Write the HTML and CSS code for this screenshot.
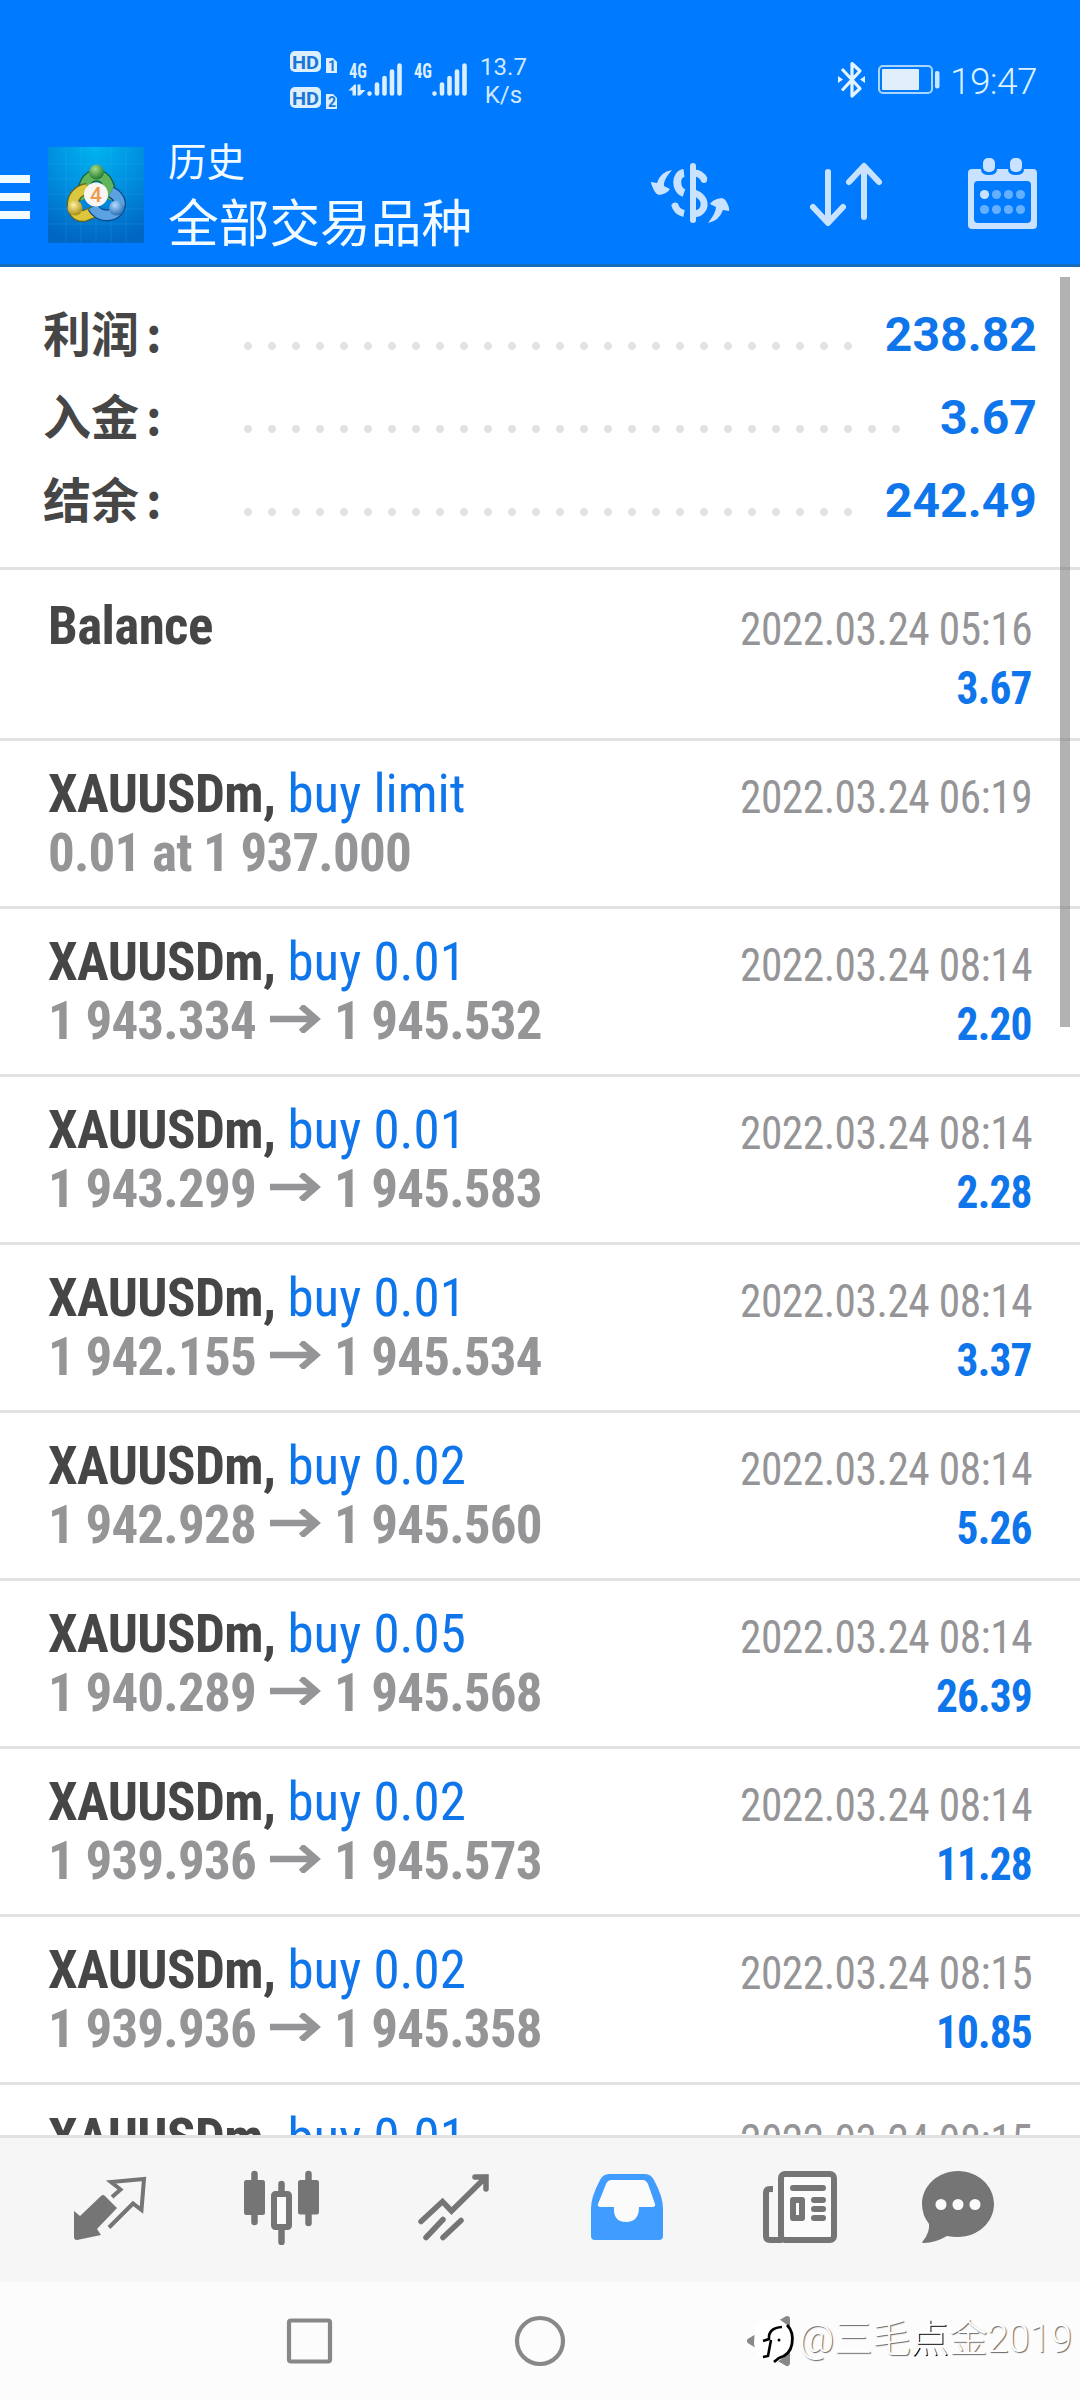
FILE: index.html
```html
<!DOCTYPE html>
<html lang="zh-CN">
<head>
<meta charset="utf-8">
<title>历史</title>
<link rel="stylesheet" href="styles.css">
</head>
<body>
<header class="header">
  <div class="status">
    <svg class="status-left" width="260" height="80" viewBox="280 40 260 80">
      <g fill="#dcefff">
        <rect x="290" y="51" width="31" height="21" rx="5"/>
        <rect x="290" y="87" width="31" height="21" rx="5"/>
        <path d="M326 58h7l4 4v11h-11z"/>
        <path d="M326 94h7l4 4v11h-11z"/>
      </g>
      <g class="hd">
        <text x="292" y="68.500" textLength="27" lengthAdjust="spacingAndGlyphs">HD</text>
        <text x="292" y="104.500" textLength="27" lengthAdjust="spacingAndGlyphs">HD</text>
        <text class="sim" x="328" y="71">1</text>
        <text class="sim" x="328" y="107">2</text>
      </g>
      <g class="net">
        <text x="349" y="77.500" textLength="18" lengthAdjust="spacingAndGlyphs">4G</text>
        <text x="414" y="77.500" textLength="18" lengthAdjust="spacingAndGlyphs">4G</text>
      </g>
      <path d="M348.500 90.500l6-6h1.500v11h-3.500v-5zM357.500 84.500h3v5.500h5l-5.500 5.500h-2.500z" fill="#dcefff"/>
      <g stroke="#dcefff" stroke-width="4.600" stroke-linecap="round">
        <path d="M369.500 93.500v.1M377 84.500v9M384.500 78v15.500M392 71.500v22M399.500 65.500v28"/>
        <path d="M434.500 93.500v.1M442 84.500v9M449.500 78v15.500M457 71.500v22M464.500 65.500v28"/>
      </g>
      <g class="speed">
        <text x="503.500" y="75" text-anchor="middle">13.7</text>
        <text x="503.500" y="103" text-anchor="middle">K/s</text>
      </g>
    </svg>
    <svg class="status-right" width="112" height="50" viewBox="834 56 112 50">
      <path d="M842 69l18 19.500-8 7.500V63.500l8 7.500-18 19.500" fill="none" stroke="#e4f4ff" stroke-width="3.200" stroke-linejoin="round"/>
      <path d="M838 76l5 3.500-5 3.500zM865 76l-5 3.500 5 3.500z" fill="#e4f4ff"/>
      <rect x="879" y="66" width="53" height="27" rx="4" fill="none" stroke="#a8d6ff" stroke-width="2"/>
      <rect x="882" y="69" width="37" height="21" rx="1" fill="#e1effc"/>
      <rect x="935" y="71" width="4.500" height="17.500" rx="2" fill="#c9e6ff"/>
    </svg>
    <span class="clock">19:47</span>
  </div>
  <div class="appbar">
    <svg class="menu" width="30" height="44" viewBox="0 0 30 44"><path d="M0 0h30v8H0zM0 18h30v8H0zM0 36h30v8H0z" fill="#f2fbff"/></svg>
    <svg class="logo" width="96" height="96" viewBox="0 0 96 96">
      <defs>
        <radialGradient id="bg" cx=".5" cy="0" r="1"><stop offset="0" stop-color="#00b4f0"/><stop offset=".5" stop-color="#008ede"/><stop offset="1" stop-color="#0066c4"/></radialGradient>
        <radialGradient id="gr" cx=".4" cy=".3" r=".7"><stop offset="0" stop-color="#a5dc8a"/><stop offset="1" stop-color="#237a2e"/></radialGradient>
        <radialGradient id="ye" cx=".4" cy=".3" r=".7"><stop offset="0" stop-color="#fff3a0"/><stop offset="1" stop-color="#a98d14"/></radialGradient>
        <radialGradient id="bl" cx=".4" cy=".3" r=".7"><stop offset="0" stop-color="#b5dcff"/><stop offset="1" stop-color="#2770b8"/></radialGradient>
      </defs>
      <rect width="96" height="96" fill="url(#bg)"/>
      <path d="M18 0v96M33 0v96M48 0v96M63 0v96M78 0v96M0 17h96M0 32h96M0 47h96M0 62h96M0 77h96" stroke="#5fc8ff" stroke-opacity=".14"/>
      <path d="M37 52a13 16 0 1 1 23 0" fill="none" stroke="#145c38" stroke-width="12"/>
      <path d="M37 52a13 16 0 1 1 23 0" fill="none" stroke="#5fb45c" stroke-width="9.500"/>
      <path d="M39 42c-18 2-19 28-3 27l10-4" fill="none" stroke="#5d6520" stroke-width="12"/>
      <path d="M39 42c-18 2-19 28-3 27l10-4" fill="none" stroke="#dbc63c" stroke-width="9.500"/>
      <path d="M45 60c7 13 27 10 27-4q-1-7-9-11" fill="none" stroke="#0c4584" stroke-width="12"/>
      <path d="M45 60c7 13 27 10 27-4q-1-7-9-11" fill="none" stroke="#5ba2e2" stroke-width="9.500"/>
      <circle cx="48.500" cy="25" r="7.500" fill="url(#gr)"/>
      <circle cx="27" cy="61" r="7.500" fill="url(#ye)"/>
      <circle cx="68.500" cy="61" r="7.500" fill="url(#bl)"/>
      <circle cx="48" cy="47.500" r="12" fill="#f8f5f2"/>
      <text x="48" y="55" class="logo-digit" text-anchor="middle">4</text>
    </svg>
    <div class="titles">
      <div class="subtitle">历史</div>
      <h1 class="title">全部交易品种</h1>
    </div>
    <svg class="actions" width="400" height="80" viewBox="645 154 400 80">
      <g fill="none" stroke="#c8e2ff" stroke-width="6" stroke-linecap="round">
        <path d="M693 166v54"/>
        <path stroke-linecap="butt" stroke-width="8" d="M684 173c-9 1-9 17 0 20"/>
        <path stroke-linecap="butt" stroke-width="7" d="M694 173q7 0 10.500 7M694 193c14 4 13 20 0 21"/>
        <path d="M704 179.500v.5M675 205.500v.5"/>
        <path stroke-linecap="butt" stroke-width="7" d="M674.500 204q2 8 9.500 9.500"/>
      </g>
      <g fill="#c8e2ff">
        <path d="M672 170q-9 10-8 16l6 3q-3 5-11 6-3-1-4-3-4-7-4-10l6 1q3-11 15-13z"/>
        <path d="M708 223q8-10 8-16l-6-3q3-5 12-6 3 1 4 3 4 7 3 10l-6-1q-4 11-15 13z"/>
      </g>
      <path d="M828 172v50M813 207l15 16 15-16M864 217v-50M849 182l15-16 15 16" fill="none" stroke="#c8e2ff" stroke-width="6" stroke-linecap="round" stroke-linejoin="round"/>
      <path fill-rule="evenodd" fill="#c8e2ff" d="M972 169h9q0 6 8 6t8-6h11q0 6 8 6t8-6h9q4 0 4 4v52q0 4-4 4h-61q-4 0-4-4v-52q0-4 4-4zM978 181q-4 0-4 4v34q0 4 4 4h49q4 0 4-4v-34q0-4-4-4z"/>
      <rect x="983" y="158" width="12" height="14" rx="5" fill="#c8e2ff"/>
      <rect x="1010" y="158" width="12" height="14" rx="5" fill="#c8e2ff"/>
      <circle cx="984.500" cy="194.500" r="4.600" fill="#c8e2ff"/>
      <g fill="#64afff"><circle cx="996.500" cy="194.500" r="4.600"/><circle cx="1008.500" cy="194.500" r="4.600"/><circle cx="1020.500" cy="194.500" r="4.600"/><circle cx="984.500" cy="209.500" r="4.600"/><circle cx="996.500" cy="209.500" r="4.600"/><circle cx="1008.500" cy="209.500" r="4.600"/><circle cx="1020.500" cy="209.500" r="4.600"/></g>
    </svg>
  </div>
</header>

<main class="history">
  <section class="summary">
    <div class="sum"><span class="sum-label">利润<span class="colon">:</span></span><span class="dots"></span><span class="sum-value">238.82</span></div>
    <div class="sum"><span class="sum-label">入金<span class="colon">:</span></span><span class="dots"></span><span class="sum-value">3.67</span></div>
    <div class="sum"><span class="sum-label">结余<span class="colon">:</span></span><span class="dots"></span><span class="sum-value">242.49</span></div>
  </section>
  <section class="deal first">
    <div class="line"><b class="symbol">Balance</b><span class="date">2022.03.24 05:16</span></div>
    <div class="line"><b class="profit">3.67</b></div>
  </section>
  <section class="deal">
    <div class="line"><b class="symbol">XAUUSDm,</b><span class="side">buy limit</span><span class="date">2022.03.24 06:19</span></div>
    <div class="line"><b class="price">0.01 at 1 937.000</b></div>
  </section>
  <section class="deal">
    <div class="line"><b class="symbol">XAUUSDm,</b><span class="side">buy 0.01</span><span class="date">2022.03.24 08:14</span></div>
    <div class="line"><b class="price">1 943.334</b><svg class="arrow" viewBox="0 0 52 28"><path d="M0 14h46M31 1l15 13-15 13"/></svg><b class="price">1 945.532</b><b class="profit">2.20</b></div>
  </section>
  <section class="deal">
    <div class="line"><b class="symbol">XAUUSDm,</b><span class="side">buy 0.01</span><span class="date">2022.03.24 08:14</span></div>
    <div class="line"><b class="price">1 943.299</b><svg class="arrow" viewBox="0 0 52 28"><path d="M0 14h46M31 1l15 13-15 13"/></svg><b class="price">1 945.583</b><b class="profit">2.28</b></div>
  </section>
  <section class="deal">
    <div class="line"><b class="symbol">XAUUSDm,</b><span class="side">buy 0.01</span><span class="date">2022.03.24 08:14</span></div>
    <div class="line"><b class="price">1 942.155</b><svg class="arrow" viewBox="0 0 52 28"><path d="M0 14h46M31 1l15 13-15 13"/></svg><b class="price">1 945.534</b><b class="profit">3.37</b></div>
  </section>
  <section class="deal">
    <div class="line"><b class="symbol">XAUUSDm,</b><span class="side">buy 0.02</span><span class="date">2022.03.24 08:14</span></div>
    <div class="line"><b class="price">1 942.928</b><svg class="arrow" viewBox="0 0 52 28"><path d="M0 14h46M31 1l15 13-15 13"/></svg><b class="price">1 945.560</b><b class="profit">5.26</b></div>
  </section>
  <section class="deal">
    <div class="line"><b class="symbol">XAUUSDm,</b><span class="side">buy 0.05</span><span class="date">2022.03.24 08:14</span></div>
    <div class="line"><b class="price">1 940.289</b><svg class="arrow" viewBox="0 0 52 28"><path d="M0 14h46M31 1l15 13-15 13"/></svg><b class="price">1 945.568</b><b class="profit">26.39</b></div>
  </section>
  <section class="deal">
    <div class="line"><b class="symbol">XAUUSDm,</b><span class="side">buy 0.02</span><span class="date">2022.03.24 08:14</span></div>
    <div class="line"><b class="price">1 939.936</b><svg class="arrow" viewBox="0 0 52 28"><path d="M0 14h46M31 1l15 13-15 13"/></svg><b class="price">1 945.573</b><b class="profit">11.28</b></div>
  </section>
  <section class="deal">
    <div class="line"><b class="symbol">XAUUSDm,</b><span class="side">buy 0.02</span><span class="date">2022.03.24 08:15</span></div>
    <div class="line"><b class="price">1 939.936</b><svg class="arrow" viewBox="0 0 52 28"><path d="M0 14h46M31 1l15 13-15 13"/></svg><b class="price">1 945.358</b><b class="profit">10.85</b></div>
  </section>
  <section class="deal">
    <div class="line"><b class="symbol">XAUUSDm,</b><span class="side">buy 0.01</span><span class="date">2022.03.24 08:15</span></div>
  </section>
  <div class="scrollbar"></div>
</main>

<nav class="tabs">
  <svg viewBox="70 2165 80 80">
    <path d="M74 2211l6 5 21-20q2-2 4 0l12 12-20 21 4 6-24 5q-3 0-3-3z" fill="#757575"/>
    <path d="M112 2197l8.500-7.500-9.500-7.500 33-3-2.500 31-8.500-6.500-24 24" fill="none" stroke="#757575" stroke-width="4"/>
  </svg>
  <svg viewBox="242 2165 80 80">
    <path d="M254.500 2174v48M281.500 2184v12M281.500 2228v14M308.500 2174v49" stroke="#757575" stroke-width="6.500" stroke-linecap="round"/>
    <rect x="244" y="2180" width="21" height="35" rx="2.500" fill="#757575"/>
    <rect x="298" y="2180" width="21" height="34.500" rx="2.500" fill="#757575"/>
    <rect x="274" y="2194" width="15" height="33" rx="1.500" fill="#fafafa" stroke="#757575" stroke-width="6"/>
  </svg>
  <svg viewBox="414 2165 80 80">
    <path d="M421 2221.500l21.500-20 9 9.500L486 2177M475 2177h11v12M426 2237.500l17-18M443 2237.500l18-17" fill="none" stroke="#757575" stroke-width="5.500" stroke-linecap="round" stroke-linejoin="miter"/>
  </svg>
  <svg viewBox="586 2165 80 80">
    <path d="M609 2174h36q6 0 9 6 9 17 9 28v28q0 4-4 4h-64q-4 0-4-4v-28q0-11 9-28 3-6 9-6z" fill="#409cff"/>
    <path d="M611 2180h32q3 0 5 4l7 20q1 3-3 3h-13q0 15-13 15t-12-15h-13q-4 0-3-3l8-20q2-4 5-4z" fill="#fbfbfb"/>
  </svg>
  <svg viewBox="760 2165 80 80">
    <rect x="781" y="2174" width="53" height="66" rx="4" fill="#fbfbfb" stroke="#757575" stroke-width="6"/>
    <path d="M773 2189h-3q-4 0-4 4v43q0 4 4 4h12" fill="none" stroke="#757575" stroke-width="6"/>
    <path d="M793 2188h30M814 2200h9M814 2209h9M814 2218h9" stroke="#757575" stroke-width="6" stroke-linecap="round"/>
    <rect x="793" y="2200" width="9" height="18" fill="#fbfbfb" stroke="#757575" stroke-width="6" stroke-linejoin="round"/>
  </svg>
  <svg viewBox="918 2165 80 80">
    <path d="M958 2171c20 0 36 15 36 33s-16 33-36 33q-6 0-11-1-12 7-23 7-3 0-1-2 7-9 6-17-7-9-7-20c0-18 16-33 36-33z" fill="#757575"/>
    <g fill="#fbfbfb"><circle cx="941" cy="2204.500" r="5.500"/><circle cx="958" cy="2204.500" r="5.500"/><circle cx="975" cy="2204.500" r="5.500"/></g>
  </svg>
</nav>

<footer class="sysnav">
  <svg width="50" height="56" viewBox="284 2313 50 56"><rect x="289" y="2320.500" width="41" height="41" rx="2" fill="none" stroke="#888" stroke-width="4.200"/></svg>
  <svg width="56" height="56" viewBox="512 2313 56 56"><circle cx="540" cy="2341" r="23" fill="none" stroke="#888" stroke-width="4.200"/></svg>
  <svg width="56" height="56" viewBox="744 2313 56 56">
    <path d="M787 2319l-37 22 37 22z" fill="none" stroke="#888" stroke-width="6" stroke-linejoin="round"/>
    <path d="M755 2325q7-7 13-5l11-1 11 8q6 15-1 26l-13 10-15-4q-7-12-7-15z" fill="#fff"/>
    <path d="M787 2325q7 7 5 19-2 11-13 14l-5 4" fill="none" stroke="#000" stroke-width="2.800"/>
    <path d="M763 2341l6-2q-1-11 13-12M771 2340l-3 16-5 1" fill="none" stroke="#000" stroke-width="2.600"/>
    <circle cx="779" cy="2340" r="1.500" fill="#000"/>
  </svg>
  <span class="watermark">@三毛<span class="dark">点</span>金2019</span>
</footer>
</body>
</html>
```
FILE: styles.css
```css
* { box-sizing: border-box; }
body {
  margin: 0;
  width: 1080px;
  height: 2400px;
  display: flex;
  flex-direction: column;
  overflow: hidden;
  background: #fff;
  font-family: Roboto, "Noto Sans CJK SC", sans-serif;
}
svg { display: block; flex: none; }

/* header */
.header {
  flex: none;
  height: 267px;
  background: #007aff;
  border-bottom: 3px solid #176cba;
  color: #f2fbff;
}
.status {
  height: 123px;
  display: flex;
  align-items: flex-start;
  padding: 40px 44px 0 280px;
}
.status-right { margin: 16px 0 0 auto; }
.clock {
  width: 90px;
  padding: 19px 0 0 4px;
  font-size: 37px;
  line-height: 46px;
  font-weight: 300;
  letter-spacing: -0.6px;
  white-space: nowrap;
  color: #dcf1ff;
}
.hd { font: 700 19px Roboto, sans-serif; fill: #1b75d6; }
.sim { font-size: 14px; }
.net { font: 700 21px "Roboto Condensed", Roboto, sans-serif; fill: #dcefff; }
.speed { font: 400 24px Roboto, sans-serif; fill: #cfe8ff; }
.appbar {
  height: 141px;
  display: flex;
  align-items: flex-start;
}
.menu { margin-top: 52px; }
.logo { margin: 24px 0 0 18px; }
.logo-digit { font: 500 21px Roboto, sans-serif; fill: #ee9a4d; }
.titles { margin: 12px 0 0 24px; }
.subtitle { font-size: 38.5px; line-height: 56px; }
.title { margin: 1px 0 0; font-size: 50.7px; line-height: 66px; font-weight: 400; white-space: nowrap; }
.actions { margin: 31px 35px 0 auto; }

/* list */
.history {
  position: relative;
  flex: none;
  height: 1868px;
  overflow: hidden;
}
.summary {
  height: 303px;
  padding: 26px 43px 0 43px;
  border-bottom: 3px solid #e2e2e2;
}
.sum {
  height: 83px;
  display: flex;
  font-size: 48px;
  line-height: 83px;
  font-weight: 700;
}
.sum-label {
  width: 201px;
  color: #464646;
  font-family: "Noto Sans CJK SC", sans-serif;
  line-height: 77px;
}
.colon { margin-left: 7px; }
.dots {
  flex: 1;
  height: 8px;
  margin: 49px 26px 0 0;
  background: radial-gradient(circle at 4px 4px, #e2e2e2 3.6px, transparent 4.4px) 0 0 / 24px 8px repeat-x;
}
.sum-value { color: #0e75ea; letter-spacing: 0.1px; }
.deal {
  height: 168px;
  padding: 24px 48px 0;
  border-bottom: 3px solid #e2e2e2;
  font-family: "Roboto Condensed", Roboto, sans-serif;
}
.deal.first { height: 171px; padding-top: 27px; }
.line {
  height: 59px;
  display: flex;
  align-items: baseline;
  font-size: 53px;
  line-height: 59px;
  white-space: nowrap;
}
.line::before { content: "\200b"; }
.symbol { color: #464646; letter-spacing: -0.6px; }
.side { margin-left: 12px; color: #0e75ea; letter-spacing: 0; }
.price { color: #959598; letter-spacing: -0.8px; }
.arrow {
  width: 52px;
  height: 28px;
  margin: 0 12px 0 14px;
  transform: translateY(-6px);
  fill: none;
  stroke: #959598;
  stroke-width: 6.5;
}
.date,
.profit {
  margin-left: auto;
  font-size: 46px;
  transform: translateY(1px) scaleX(0.942);
  transform-origin: right;
}
.date { color: #959598; letter-spacing: -0.5px; }
.profit { color: #0e75ea; letter-spacing: -0.9px; }
.scrollbar {
  position: absolute;
  top: 10px;
  right: 10px;
  width: 10px;
  height: 750px;
  background: rgba(110, 110, 110, 0.53);
}

/* bottom bars */
.tabs {
  flex: none;
  height: 147px;
  padding: 27px 0 0 70px;
  display: grid;
  grid-template-columns: 172px 172px 172px 174px 158px 80px;
  background: #f6f6f6;
  border-top: 3px solid #e2e2e2;
}
.tabs svg { width: 80px; height: 80px; }
.sysnav {
  flex: none;
  height: 118px;
  padding: 31px 0 0 284px;
  display: grid;
  grid-template-columns: 228px 232px 55px 1fr;
  background: #fcfcfc;
}
.watermark {
  font: 300 38.5px/52px Roboto, "Noto Sans CJK SC", sans-serif;
  letter-spacing: -0.2px;
  white-space: nowrap;
  color: #fff;
  text-shadow: 1px 1px 1px #666;
}
.dark { text-shadow: 1px 1px 0 #000; }
```
